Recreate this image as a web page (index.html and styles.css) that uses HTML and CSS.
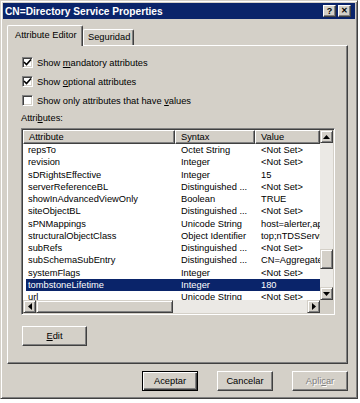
FILE: index.html
```html
<!DOCTYPE html>
<html lang="es">

<head>
    <meta charset="UTF-8">
    <title>CN=Directory Service Properties</title>
    <link rel="stylesheet" href="styles.css">
</head>

<body>
    <div class="window">
        <div class="titlebar">
            <span class="title">CN=Directory Service Properties</span>
            <span class="tbtn">?</span>
            <span class="tbtn close">&#x2715;</span>
        </div>

        <div class="tabs">
            <div class="tab active">Attribute Editor</div>
            <div class="tab">Seguridad</div>
        </div>

        <div class="panel">
            <div class="check">
                <span class="box on"><svg width="9" height="9" viewBox="0 0 9 9"><path d="M1 4 L3.5 6.5 L8 1.5" fill="none" stroke="#000" stroke-width="1.6"/></svg></span>
                Show&nbsp;<u>m</u>andatory attributes
            </div>
            <div class="check">
                <span class="box on"><svg width="9" height="9" viewBox="0 0 9 9"><path d="M1 4 L3.5 6.5 L8 1.5" fill="none" stroke="#000" stroke-width="1.6"/></svg></span>
                Show&nbsp;<u>o</u>ptional attributes
            </div>
            <div class="check">
                <span class="box"></span>
                Show only attributes that have&nbsp;<u>v</u>alues
            </div>

            <div class="label">Attri<u>b</u>utes:</div>

            <div class="list">
                <div class="data">
                    <div class="row head">
                        <span>Attribute</span><span>Syntax</span><span>Value</span>
                    </div>
                    <div class="rows">
                        <div class="row"><span>repsTo</span><span>Octet String</span><span>&lt;Not Set&gt;</span></div>
                        <div class="row"><span>revision</span><span>Integer</span><span>&lt;Not Set&gt;</span></div>
                        <div class="row"><span>sDRightsEffective</span><span>Integer</span><span>15</span></div>
                        <div class="row"><span>serverReferenceBL</span><span>Distinguished ...</span><span>&lt;Not Set&gt;</span></div>
                        <div class="row"><span>showInAdvancedViewOnly</span><span>Boolean</span><span>TRUE</span></div>
                        <div class="row"><span>siteObjectBL</span><span>Distinguished ...</span><span>&lt;Not Set&gt;</span></div>
                        <div class="row"><span>sPNMappings</span><span>Unicode String</span><span>host=alerter,appmgmt</span></div>
                        <div class="row"><span>structuralObjectClass</span><span>Object Identifier</span><span>top;nTDSService</span></div>
                        <div class="row"><span>subRefs</span><span>Distinguished ...</span><span>&lt;Not Set&gt;</span></div>
                        <div class="row"><span>subSchemaSubEntry</span><span>Distinguished ...</span><span>CN=Aggregate,CN=Schema</span></div>
                        <div class="row"><span>systemFlags</span><span>Integer</span><span>&lt;Not Set&gt;</span></div>
                        <div class="row selected"><span>tombstoneLifetime</span><span>Integer</span><span>180</span></div>
                        <div class="row"><span>url</span><span>Unicode String</span><span>&lt;Not Set&gt;</span></div>
                    </div>
                </div>

                <div class="vscroll">
                    <span class="sbtn"><svg width="7" height="4" viewBox="0 0 7 4"><path d="M0 4 L3.5 0 L7 4 Z"/></svg></span>
                    <div class="track v">
                        <span class="thumb"></span>
                    </div>
                    <span class="sbtn"><svg width="7" height="4" viewBox="0 0 7 4"><path d="M0 0 L3.5 4 L7 0 Z"/></svg></span>
                </div>

                <div class="hscroll">
                    <span class="sbtn"><svg width="4" height="7" viewBox="0 0 4 7"><path d="M4 0 L0 3.5 L4 7 Z"/></svg></span>
                    <span class="thumb"></span>
                    <div class="track"></div>
                    <span class="sbtn"><svg width="4" height="7" viewBox="0 0 4 7"><path d="M0 0 L4 3.5 L0 7 Z"/></svg></span>
                </div>
                <div class="corner"></div>
            </div>

            <div class="btn edit"><u>E</u>dit</div>
        </div>

        <div class="footer">
            <div class="btn default">Aceptar</div>
            <div class="btn">Cancelar</div>
            <div class="btn disabled">Apli<u>c</u>ar</div>
        </div>
    </div>
</body>

</html>
```

FILE: styles.css
```css
body {
    margin: 0;
    background-color: #fff;
    font-family: "Liberation Sans", Arial, sans-serif;
    font-size: 9.3px;
    color: #000;
}

.window {
    width: 358px;
    height: 399px;
    box-sizing: border-box;
    padding: 2px;
    background-color: #d4d0c8;
    border: 1px solid;
    border-color: #d4d0c8 #404040 #404040 #d4d0c8;
    box-shadow: inset 1px 1px #fff, inset -1px -1px #808080;
}

/* barra de título */
.titlebar {
    height: 16px;
    background-color: #0a246a;
    display: flex;
    align-items: center;
    padding: 0 4px 0 2px;
    gap: 2px;
}

.title {
    flex: 1;
    color: #fff;
    font-weight: bold;
    font-size: 10.2px;
}

.tbtn {
    width: 13px;
    height: 12px;
    box-sizing: border-box;
    background-color: #d4d0c8;
    border: 1px solid;
    border-color: #fff #404040 #404040 #fff;
    box-shadow: inset -1px -1px #808080;
    font-weight: bold;
    font-size: 9px;
    line-height: 10px;
    text-align: center;
}

.tbtn.close {
    font-size: 8px;
}

/* pestañas */
.tabs {
    display: flex;
    align-items: flex-end;
    margin-top: 6px;
    padding-left: 4px;
    position: relative;
    z-index: 1;
}

.tab {
    height: 16px;
    line-height: 15px;
    box-sizing: border-box;
    padding: 0 4px;
    border: 1px solid #fff;
    border-right: 1px solid #404040;
    border-bottom: none;
    box-shadow: inset -1px 0 #808080;
    border-radius: 2px 2px 0 0;
}

.tab.active {
    width: 76px;
    height: 21px;
    line-height: 19px;
    padding-left: 7px;
    margin-bottom: -1px;
    background-color: #d4d0c8;
}

.tab:not(.active) {
    width: 51px;
    height: 16px;
}

.panel {
    height: 319px;
    box-sizing: border-box;
    margin: 0 7px 0 4px;
    padding: 7px 0 0 13px;
    border: 1px solid;
    border-color: #fff #404040 #404040 #fff;
    box-shadow: inset -1px -1px #808080;
}

.check {
    height: 19px;
    display: flex;
    align-items: center;
    padding-left: 1px;
}

.check u,
.label u,
.btn u {
    text-underline-offset: 1px;
}

.box {
    width: 11px;
    height: 11px;
    box-sizing: border-box;
    margin-right: 4px;
    background-color: #fff;
    border: 1px solid;
    border-color: #808080 #fff #fff #808080;
    box-shadow: inset 1px 1px #404040, inset -1px -1px #d4d0c8;
    display: flex;
    align-items: center;
    justify-content: center;
}

.label {
    height: 12px;
    line-height: 12px;
    margin-top: 2px;
}

/* lista de atributos */
.list {
    width: 314px;
    height: 187px;
    box-sizing: border-box;
    margin-top: 4px;
    background-color: #fff;
    border: 1px solid;
    border-color: #808080 #fff #fff #808080;
    box-shadow: inset 1px 1px #404040, inset -1px -1px #d4d0c8;
    padding: 1px;
    display: grid;
    grid-template-columns: 1fr 13px;
    grid-template-rows: 1fr 13px;
}

.data {
    overflow: hidden;
    display: flex;
    flex-direction: column;
}

.row {
    display: grid;
    grid-template-columns: 152px 80px 1fr;
    height: 12.25px;
    line-height: 12.25px;
    white-space: nowrap;
}

.row span {
    overflow: hidden;
    padding-left: 6px;
}

.row span:first-child {
    margin-left: 3px;
    padding-left: 2px;
}

.row.selected span {
    background-color: #0a246a;
    color: #fff;
}

.row.head {
    height: 14px;
    line-height: 12px;
    flex: none;
}

.row.head span {
    margin-left: 0;
    padding-left: 5px;
    background-color: #d4d0c8;
    border: 1px solid;
    border-color: #fff #404040 #404040 #fff;
    box-shadow: inset -1px -1px #808080;
}

.row.head span + span {
    padding-left: 5px;
}

.rows {
    overflow: hidden;
}

.vscroll {
    display: flex;
    flex-direction: column;
}

.hscroll {
    display: flex;
}

.track {
    flex: 1;
    background-color: #ebe9e5;
}

.track.v {
    display: flex;
    flex-direction: column;
}

.sbtn,
.thumb {
    flex: none;
    width: 13px;
    height: 13px;
    box-sizing: border-box;
    background-color: #d4d0c8;
    border: 1px solid;
    border-color: #d4d0c8 #404040 #404040 #d4d0c8;
    box-shadow: inset 1px 1px #fff, inset -1px -1px #808080;
    display: flex;
    align-items: center;
    justify-content: center;
}

.track.v .thumb {
    height: 20px;
    margin-top: 106px;
}

.hscroll .thumb {
    width: 137px;
}

.corner {
    background-color: #d4d0c8;
}

/* botones */
.btn {
    width: 56px;
    height: 20px;
    box-sizing: border-box;
    border: 1px solid;
    border-color: #fff #404040 #404040 #fff;
    box-shadow: inset -1px -1px #808080;
    text-align: center;
    line-height: 18px;
}

.btn.edit {
    width: 65px;
    margin-top: 11px;
    margin-left: 1px;
}

.btn.default {
    border: 1px solid #000;
    box-shadow: inset 1px 1px #fff, inset -1px -1px #404040, inset -2px -2px #808080;
}

.btn.disabled {
    color: #808080;
    text-shadow: 1px 1px #fff;
}

.footer {
    display: flex;
    justify-content: flex-end;
    gap: 19px;
    margin-top: 7px;
    padding-right: 7px;
}
```
